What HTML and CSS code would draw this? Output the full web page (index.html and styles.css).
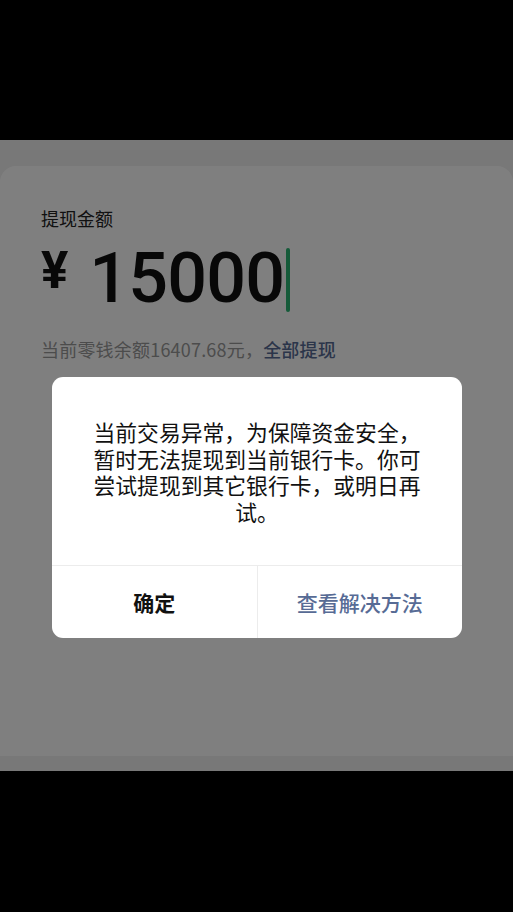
FILE: index.html
```html
<!DOCTYPE html>
<html lang="zh-CN">
<head>
<meta charset="utf-8">
<title>提现</title>
<link rel="stylesheet" href="styles.css">
</head>
<body>
<div class="top"></div>
<div class="screen">
  <div class="card">
    <div class="label">提现金额</div>
    <div class="amount">
      <span class="yen">¥</span>
      <span class="digits">15000</span>
      <span class="cursor"></span>
    </div>
    <div class="balance">当前零钱余额16407.68元，<span class="all">全部提现</span></div>
  </div>
  <div class="mask"></div>
  <div class="dialog">
    <div class="msg">当前交易异常，为保障资金安全，暂时无法提现到当前银行卡。你可尝试提现到其它银行卡，或明日再试。</div>
    <div class="actions">
      <div class="btn ok">确定</div>
      <div class="btn link">查看解决方法</div>
    </div>
  </div>
</div>
<div class="bottom"></div>
</body>
</html>
```
FILE: styles.css
```css
html, body {
  margin: 0;
  padding: 0;
  background: #000;
}
body {
  width: 513px;
  height: 912px;
  overflow: hidden;
  font-family: "Noto Sans CJK SC", "Noto Sans", sans-serif;
}
.top {
  height: 140px;
  background: #000;
}
.screen {
  position: relative;
  height: 631px;
  background: #f0f0f0;
  padding-top: 26px;
  box-sizing: border-box;
  overflow: hidden;
}
.card {
  background: #fff;
  border-radius: 16px 16px 0 0;
  height: 590px;
  padding: 40px 41px 0;
  box-sizing: border-box;
}
.label {
  font-size: 18px;
  line-height: 24px;
  color: #222;
}
.amount {
  display: flex;
  align-items: flex-start;
  margin-top: 13px;
  height: 71px;
}
.yen {
  font-family: Roboto, "Liberation Sans", sans-serif;
  font-weight: 700;
  font-size: 51px;
  line-height: 50px;
  margin-top: 3px;
  margin-right: 21px;
  color: #111;
}
.digits {
  font-family: Roboto, "Liberation Sans", sans-serif;
  font-weight: 500;
  font-size: 70px;
  line-height: 71px;
  color: #111;
  letter-spacing: -0.8px;
}
.cursor {
  width: 4px;
  height: 64px;
  border-radius: 2px;
  background: #2bb573;
  margin-top: 5px;
  margin-left: 2px;
}
.balance {
  margin-top: 23px;
  font-size: 18px;
  line-height: 24px;
  letter-spacing: 0.2px;
  color: #999;
}
.all {
  color: #576b95;
  font-weight: 500;
}
.mask {
  position: absolute;
  inset: 0;
  background: rgba(0, 0, 0, 0.5);
}
.dialog {
  position: absolute;
  top: 237px;
  left: 52px;
  width: 410px;
  background: #fff;
  border-radius: 11px;
  overflow: hidden;
}
.msg {
  padding: 42px 39px 0;
  height: 188px;
  box-sizing: border-box;
  font-size: 21.8px;
  line-height: 26.7px;
  color: #111;
  text-align: center;
}
.actions {
  display: flex;
  height: 72px;
  border-top: 1px solid #ececec;
}
.btn {
  flex: 1;
  display: flex;
  align-items: center;
  justify-content: center;
  font-size: 21px;
}
.ok {
  color: #111;
  font-weight: 700;
  border-right: 1px solid #ececec;
}
.link {
  color: #576b95;
  font-weight: 500;
}
.bottom {
  height: 141px;
  background: #000;
}
```
